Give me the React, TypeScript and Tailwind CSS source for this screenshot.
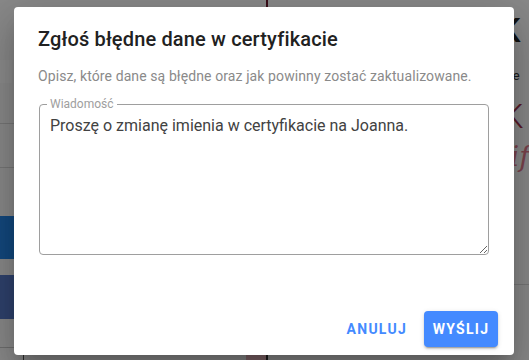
import React from "react";

export default function App() {
  return (
    <div
      className="relative h-[360px] w-[529px] overflow-hidden bg-[#f9f9f9]"
      style={{ fontFamily: "Roboto, 'Liberation Sans', sans-serif" }}
    >
      {/* background page (behind overlay) */}
      <div className="flex h-full w-full">
        <div className="flex w-[40px] flex-col">
          <div className="mt-[60px] h-[23px] w-[12px] bg-white" />
          <div className="mt-[40px] h-px bg-[#d8d8d8]" />
          <div className="mt-[43px] h-px bg-[#d8d8d8]" />
          <div className="mt-[48px] h-[44px] bg-[#2484e6]" />
          <div className="mt-[16px] h-[44px] bg-[#5779c6]" />
          <div className="mt-[28px] h-px bg-[#c8c8c8]" />
          <div className="ml-[23px] h-[12px] w-px bg-[#555]" />
        </div>
        <div className="flex flex-1 flex-col">
          <div className="ml-[226px] h-[10px] w-[2px] bg-[#6b1a2e]" />
          <div className="mt-auto flex h-[6px]">
            <div className="ml-[206px] h-[6px] w-[20px] bg-[#e8b4bc]" />
            <div className="h-[6px] w-[2px] bg-[#333]" />
          </div>
        </div>
        <div className="flex w-[30px] flex-col overflow-hidden">
          <div className="mt-[12px] text-[34px] font-medium leading-[36px] text-[#222]">K</div>
          <div className="mt-[20px] text-[13px] leading-[16px] text-[#333]">zne</div>
          <div className="mt-[14px] ml-[3px] text-[34px] font-light leading-[36px] text-[#a3304c]">K</div>
          <div
            className="mt-[6px] text-[28px] italic leading-[34px] text-[#e07a8c]"
            style={{ fontFamily: "'DejaVu Serif', serif" }}
          >
            tif
          </div>
          <div className="mt-[110px] h-px bg-[#d8d8d8]" />
        </div>
      </div>

      {/* overlay */}
      <div className="absolute inset-0 bg-black/[0.45]" />

      {/* dialog */}
      <div className="absolute left-[14px] top-[7px] flex h-[348px] w-[500px] flex-col rounded-[4px] bg-white shadow-[0_11px_15px_-7px_rgba(0,0,0,0.2),0_24px_38px_3px_rgba(0,0,0,0.14),0_9px_46px_8px_rgba(0,0,0,0.12)]">
        <h2 className="px-6 pt-4 text-[20px] font-medium leading-[32px] tracking-[0.15px] text-[#212121]">
          Zgłoś błędne dane w certyfikacie
        </h2>
        <p className="mt-[11px] whitespace-nowrap px-6 text-[14px] leading-[20px] tracking-[0.1px] text-[#8a8a8a]">
          Opisz, które dane są błędne oraz jak powinny zostać zaktualizowane.
        </p>
        <div className="relative mx-[25px] mt-[18px]">
          <textarea
            className="block h-[151px] w-full resize-y rounded-[4px] border border-[#9e9e9e] px-[10px] pt-[9px] text-[16px] leading-[24px] text-[#424242] outline-none"
            defaultValue="Proszę o zmianę imienia w certyfikacie na Joanna."
          />
          <span className="absolute left-[8px] top-[-8px] bg-white px-[3px] text-[12px] leading-[16px] text-[#9e9e9e]">
            Wiadomość
          </span>
        </div>
        <div className="mt-auto flex items-center justify-end gap-2 pb-2 pr-4">
          <button className="h-[36px] rounded-[4px] px-[9px] text-[14px] font-bold uppercase tracking-[1.25px] text-[#448aff]">
            Anuluj
          </button>
          <button className="h-[36px] w-[74px] rounded-[4px] bg-[#448aff] text-[14px] font-bold uppercase tracking-[1.25px] text-white shadow-[0_3px_1px_-2px_rgba(0,0,0,0.2),0_2px_2px_0_rgba(0,0,0,0.14),0_1px_5px_0_rgba(0,0,0,0.12)]">
            Wyślij
          </button>
        </div>
      </div>
    </div>
  );
}
